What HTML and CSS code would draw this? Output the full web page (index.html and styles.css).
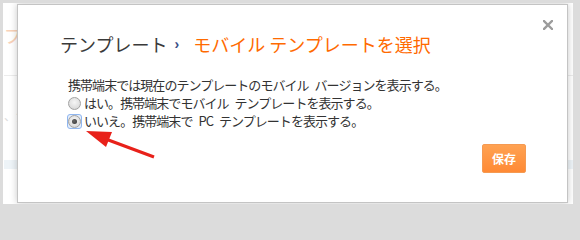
FILE: index.html
```html
<!DOCTYPE html>
<html lang="ja">
<head>
<meta charset="utf-8">
<title>モバイル テンプレートを選択</title>
<link rel="stylesheet" href="styles.css">
</head>
<body>
<div class="page">
  <div class="bg">
    <div class="bg-title">プ</div>
    <div class="bg-rule"></div>
    <div class="bg-text">、食</div>
    <div class="bg-band"></div>
  </div>
  <div class="dialog" role="dialog">
    <button class="close" aria-label="閉じる">
      <svg width="10" height="10" viewBox="0 0 10 10"><path d="M1 1L9 9M9 1L1 9" stroke="#9c9c9c" stroke-width="2.4" stroke-linecap="square"/></svg>
    </button>
    <h1 class="title"><span class="crumb">テンプレート</span><span class="sep">›</span><span class="current">モバイル テンプレートを選択</span></h1>
    <div class="body">
      <p class="line">携帯端末では現在のテンプレートのモバイル バージョンを表示する。</p>
      <label class="line opt"><span class="ring"><input type="radio" name="mobile" class="radio"></span>はい。携帯端末でモバイル テンプレートを表示する。</label>
      <label class="line opt"><span class="ring focused"><input type="radio" name="mobile" class="radio" checked></span>いいえ。携帯端末で PC テンプレートを表示する。</label>
    </div>
    <div class="actions"><button class="save">保存</button></div>
  </div>
  <svg class="arrow" width="570" height="201" viewBox="0 0 570 201">
    <line x1="151" y1="154" x2="100" y2="135" stroke="#e8211a" stroke-width="3.2"/>
    <polygon points="83,128 109,129 103,144" fill="#e8211a"/>
  </svg>
</div>
</body>
</html>
```

FILE: styles.css
```css
html, body {
  margin: 0;
  padding: 0;
}
html {
  background: #dcdcdc;
}
body {
  font-family: "Noto Sans CJK JP", "Noto Sans", sans-serif;
  width: 580px;
  height: 209px;
  overflow: hidden;
}
.page {
  position: relative;
  margin: 3px 0 0 3px;
  width: 570px;
  height: 201px;
  background: #fff;
  overflow: hidden;
}
.bg {
  padding-left: 1px;
  white-space: nowrap;
}
.bg-title {
  padding-top: 20px;
  font-size: 18px;
  line-height: 24px;
  color: #f9d2b8;
}
.bg-rule {
  margin-top: 28px;
  height: 1px;
  background: #ececec;
}
.bg-text {
  margin-top: 32px;
  font-size: 12px;
  line-height: 16px;
  color: #dcdcdc;
}
.bg-band {
  margin-top: 36px;
  height: 9px;
  background: #eef4f8;
}
.dialog {
  position: absolute;
  left: 14px;
  top: 1px;
  width: 551px;
  height: 199px;
  box-sizing: border-box;
  border: 1px solid #c4c4c4;
  background: #fff;
  box-shadow: 0 0 7px rgba(0, 0, 0, 0.22);
  padding: 27px 41px 0 42px;
}
.close {
  position: absolute;
  top: 15px;
  right: 14px;
  width: 10px;
  height: 10px;
  padding: 0;
  border: 0;
  background: none;
  display: flex;
}
.title {
  margin: 0;
  font-size: 18px;
  line-height: 24px;
  font-weight: normal;
  color: #3a3a3a;
  display: flex;
  align-items: center;
}
.sep {
  display: inline-block;
  font-family: "Liberation Sans", sans-serif;
  font-weight: bold;
  font-size: 14px;
  line-height: 14px;
  color: #3b4e86;
  margin: 0 14px 0 7px;
}
.current {
  color: #ff6a00;
}
.body {
  margin: 20px 0 0 8px;
  font-size: 13px;
  line-height: 18px;
  letter-spacing: -0.95px;
  word-spacing: 4px;
  color: #333;
}
.line {
  margin: 0;
  display: flex;
  align-items: center;
  height: 18px;
  white-space: pre;
}
.ring {
  display: flex;
  flex: none;
  margin: 0 2px 0 -1px;
  padding: 0;
  border: 1px solid transparent;
  border-radius: 3px;
}
.ring.focused {
  border-color: #8fb6ef;
  background: #e4eefc;
}
.radio {
  appearance: none;
  -webkit-appearance: none;
  margin: 0;
  width: 13px;
  height: 13px;
  border-radius: 50%;
  border: 1px solid #a2a2a2;
  box-sizing: border-box;
  background: radial-gradient(circle at 50% 40%, #f6f6f6 0%, #e2e2e2 55%, #cfcfcf 100%);
  position: relative;
}
.radio:checked::after {
  content: "";
  position: absolute;
  left: 3px;
  top: 3px;
  width: 5px;
  height: 5px;
  border-radius: 50%;
  background: radial-gradient(circle at 40% 40%, #666 0%, #333 100%);
}
.actions {
  margin-top: 14px;
  display: flex;
  justify-content: flex-end;
}
.save {
  width: 44px;
  height: 29px;
  padding: 0;
  border: 1px solid #f59a52;
  border-radius: 2px;
  background: linear-gradient(#ffa252, #ff8a35);
  color: #fff;
  font-family: "Noto Sans CJK JP", sans-serif;
  font-size: 12px;
  font-weight: bold;
  line-height: 27px;
}
.arrow {
  position: absolute;
  left: 0;
  top: 0;
  pointer-events: none;
}
```
